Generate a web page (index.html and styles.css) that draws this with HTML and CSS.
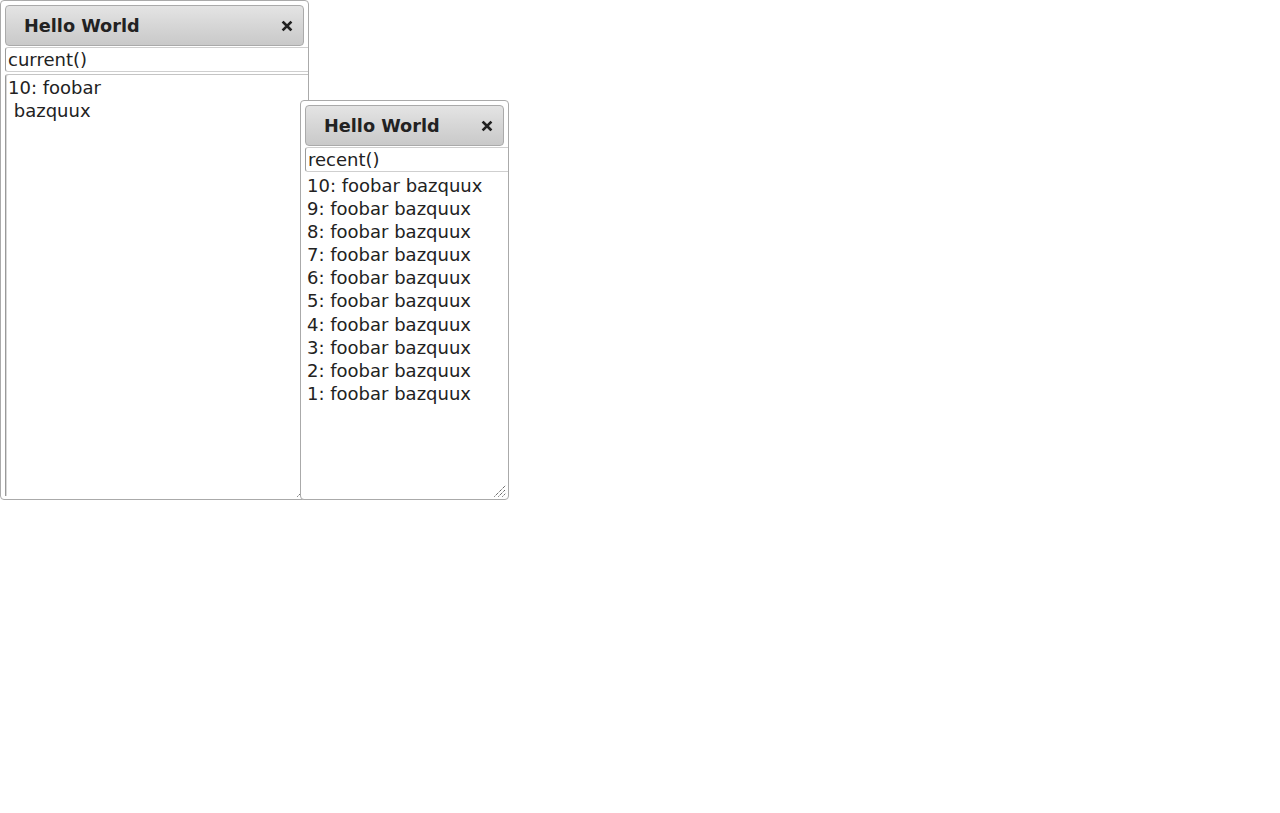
FILE: index.html
```html
<!DOCTYPE html>
<html>
<head>
<meta charset="utf-8">
<title>Dialogs</title>
<link rel="stylesheet" href="styles.css">
</head>
<body>
<div class="dialog dialog-current">
  <div class="titlebar">
    <span class="title">Hello World</span>
    <span class="close" title="close">
      <svg width="16" height="16" viewBox="0 0 16 16"><path d="M4.5 4.5 L11.5 11.5 M11.5 4.5 L4.5 11.5" stroke="#222" stroke-width="2.6" stroke-linecap="square" fill="none"/></svg>
    </span>
  </div>
  <div class="content">
    <input class="query" type="text" value="current()">
    <textarea class="output" readonly>10: foobar
 bazquux</textarea>
  </div>
  <span class="grip">
    <svg width="12" height="12" viewBox="0 0 12 12"><g stroke="#222" stroke-width="1" stroke-dasharray="1 1" fill="none"><path d="M3.5 11.5 L11.5 3.5"/><path d="M7.5 11.5 L11.5 7.5"/></g></svg>
  </span>
</div>

<div class="dialog dialog-recent">
  <div class="titlebar">
    <span class="title">Hello World</span>
    <span class="close" title="close">
      <svg width="16" height="16" viewBox="0 0 16 16"><path d="M4.5 4.5 L11.5 11.5 M11.5 4.5 L4.5 11.5" stroke="#222" stroke-width="2.6" stroke-linecap="square" fill="none"/></svg>
    </span>
  </div>
  <div class="content">
    <input class="query" type="text" value="recent()">
    <div class="list">
      <div class="row">10: foobar bazquux</div>
      <div class="row">9: foobar bazquux</div>
      <div class="row">8: foobar bazquux</div>
      <div class="row">7: foobar bazquux</div>
      <div class="row">6: foobar bazquux</div>
      <div class="row">5: foobar bazquux</div>
      <div class="row">4: foobar bazquux</div>
      <div class="row">3: foobar bazquux</div>
      <div class="row">2: foobar bazquux</div>
      <div class="row">1: foobar bazquux</div>
    </div>
  </div>
  <span class="grip">
    <svg width="12" height="12" viewBox="0 0 12 12"><g stroke="#222" stroke-width="1" stroke-dasharray="1 1" fill="none"><path d="M0.5 11.5 L11.5 0.5"/><path d="M4.5 11.5 L11.5 4.5"/><path d="M8.5 11.5 L11.5 8.5"/></g></svg>
  </span>
</div>
</body>
</html>
```

FILE: styles.css
```css
html, body {
  margin: 0;
  padding: 0;
  background: #fff;
}

body {
  font-family: "DejaVu Sans", Verdana, sans-serif;
  font-size: 18px;
  color: #222;
  width: 1280px;
  height: 813px;
  position: relative;
}

.dialog {
  position: absolute;
  box-sizing: border-box;
  border: 1px solid #aaa;
  border-radius: 4px;
  background: #fff;
  padding: 4px 4px 3px 4px;
  display: flex;
  flex-direction: column;
  overflow: hidden;
}

.dialog-current {
  left: 0;
  top: 0;
  width: 309px;
  height: 500px;
  z-index: 1;
}

.dialog-recent {
  left: 300px;
  top: 100px;
  width: 209px;
  height: 400px;
  z-index: 2;
}

.titlebar {
  flex: none;
  box-sizing: border-box;
  height: 41px;
  border: 1px solid #aaa;
  border-radius: 4px;
  background: linear-gradient(to bottom, #e4e4e4 0%, #d6d6d6 50%, #c9c9c9 100%);
  display: flex;
  align-items: center;
  justify-content: space-between;
  padding: 0 8px 0 18px;
}

.title {
  font-weight: bold;
  font-size: 17.7px;
  color: #222;
  line-height: 1;
  padding-top: 3px;
}

.close {
  width: 16px;
  height: 16px;
  display: block;
}

.close svg {
  display: block;
}

.content {
  flex: 1;
  min-height: 0;
  overflow: hidden;
  margin-right: -4px;
}

.query {
  display: block;
  box-sizing: border-box;
  width: calc(100% + 10px);
  height: 25px;
  margin: 1px 0 0 0;
  padding: 0 2px;
  border: 1px solid #cfcfcf;
  border-left-color: #9a9a9a;
  border-radius: 3px;
  font-family: "DejaVu Sans", Verdana, sans-serif;
  font-size: 18px;
  color: #222;
  background: #fff;
  outline: none;
}

.output {
  display: block;
  box-sizing: border-box;
  width: calc(100% + 10px);
  height: 460px;
  margin: 2px 0 0 0;
  padding: 1px 2px;
  border: 1px solid #c4c4c4;
  border-left-color: #999;
  border-radius: 3px;
  box-shadow: inset 1px 0 0 #d8d8d8;
  font-family: "DejaVu Sans", Verdana, sans-serif;
  font-size: 18px;
  line-height: 23px;
  color: #222;
  resize: none;
  overflow: hidden;
  outline: none;
  background: #fff;
}

.list {
  margin-top: 2px;
  padding-left: 2px;
}

.row {
  line-height: 23.1px;
  white-space: nowrap;
  font-size: 18px;
  color: #222;
}

.grip {
  position: absolute;
  right: 2px;
  bottom: 2px;
  width: 12px;
  height: 12px;
  display: block;
  z-index: 3;
}

.grip svg {
  display: block;
}
```
